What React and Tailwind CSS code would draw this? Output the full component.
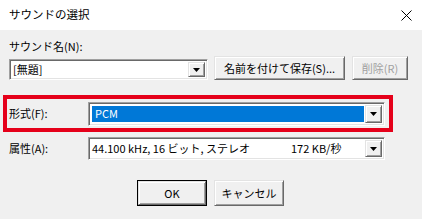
import React from "react";

const font = { fontFamily: '"Noto Sans CJK JP", "Noto Sans", sans-serif' };

// sunken 3D field border (classic windows combobox)
const sunken =
  "border border-t-[#a0a0a0] border-l-[#a0a0a0] border-b-white border-r-white shadow-[inset_1px_1px_0_#696969,inset_-1px_-1px_0_#e3e3e3]";

// raised 3D button border
const raised =
  "border border-t-[#e3e3e3] border-l-[#e3e3e3] border-b-[#696969] border-r-[#696969] shadow-[inset_1px_1px_0_#ffffff,inset_-1px_-1px_0_#a0a0a0]";

function Arrow() {
  return (
    <svg width="7" height="4" viewBox="0 0 7 4">
      <path d="M0 0H7L3.5 4Z" fill="#000" />
    </svg>
  );
}

function DropButton() {
  return (
    <div className={`w-[17px] h-full bg-[#f0f0f0] flex items-center justify-center shrink-0 ${raised}`}>
      <Arrow />
    </div>
  );
}

function Combo({ className, children, selected }) {
  return (
    <div className={`bg-white flex p-[2px] ${sunken} ${className}`}>
      <div className="flex-1 flex items-center min-w-0 pr-[1px]">
        {selected ? (
          <div className="h-[calc(100%-2px)] w-full bg-[#0078d7] text-white flex items-center pl-[3px] ml-[1px]">
            {children}
          </div>
        ) : (
          <div className="w-full flex items-center pl-[1px] text-black">{children}</div>
        )}
      </div>
      <DropButton />
    </div>
  );
}

export default function App() {
  return (
    <div className="w-[422px] h-[219px] bg-[#f0f0f0] overflow-hidden text-[11px] text-black" style={font}>
      {/* title bar */}
      <div className="h-[30px] bg-white flex items-center justify-between pl-[9px] pr-[10px]">
        <span className="text-[11.5px]">サウンドの選択</span>
        <svg width="11" height="11" viewBox="0 0 11 11">
          <path d="M0.5 0.5L10.5 10.5M10.5 0.5L0.5 10.5" stroke="#000" strokeWidth="1" />
        </svg>
      </div>

      <div className="pl-[9px] mt-[8px] h-[16px] leading-[16px]">サウンド名(N):</div>

      <div className="mt-[2px] h-[24px] flex items-end pl-[9px]">
        <Combo className="w-[199px] h-[21px]">[無題]</Combo>
        <button className={`ml-[6px] w-[131px] h-[24px] bg-[#f0f0f0] flex items-center justify-center ${raised}`}>
          名前を付けて保存(S)...
        </button>
        <button className={`ml-[7px] w-[56px] h-[24px] bg-[#f0f0f0] text-[#a0a0a0] flex items-center justify-center ${raised}`}>
          削除(R)
        </button>
      </div>

      <div className="mt-[15px] ml-[3px] w-[390px] h-[37px] border-4 border-[#e5001a] flex items-center">
        <div className="w-[81px] pl-[2px]">形式(F):</div>
        <Combo className="w-[297px] h-[24px]" selected>
          PCM
        </Combo>
      </div>

      <div className="mt-[5px] ml-[9px] h-[23px] flex items-center">
        <div className="w-[79px]">属性(A):</div>
        <Combo className="w-[297px] h-[23px]">
          <span className="w-[199px]">44.100 kHz, 16 ビット, ステレオ</span>
          <span>172 KB/秒</span>
        </Combo>
      </div>

      <div className="mt-[20px] flex pl-[137px] gap-[7px]">
        <button className="w-[70px] h-[26px] border border-[#000] bg-[#f0f0f0] p-0">
          <div className={`w-full h-full flex items-center justify-center ${raised}`}>OK</div>
        </button>
        <button className={`w-[70px] h-[26px] bg-[#f0f0f0] flex items-center justify-center ${raised}`}>
          キャンセル
        </button>
      </div>
    </div>
  );
}
